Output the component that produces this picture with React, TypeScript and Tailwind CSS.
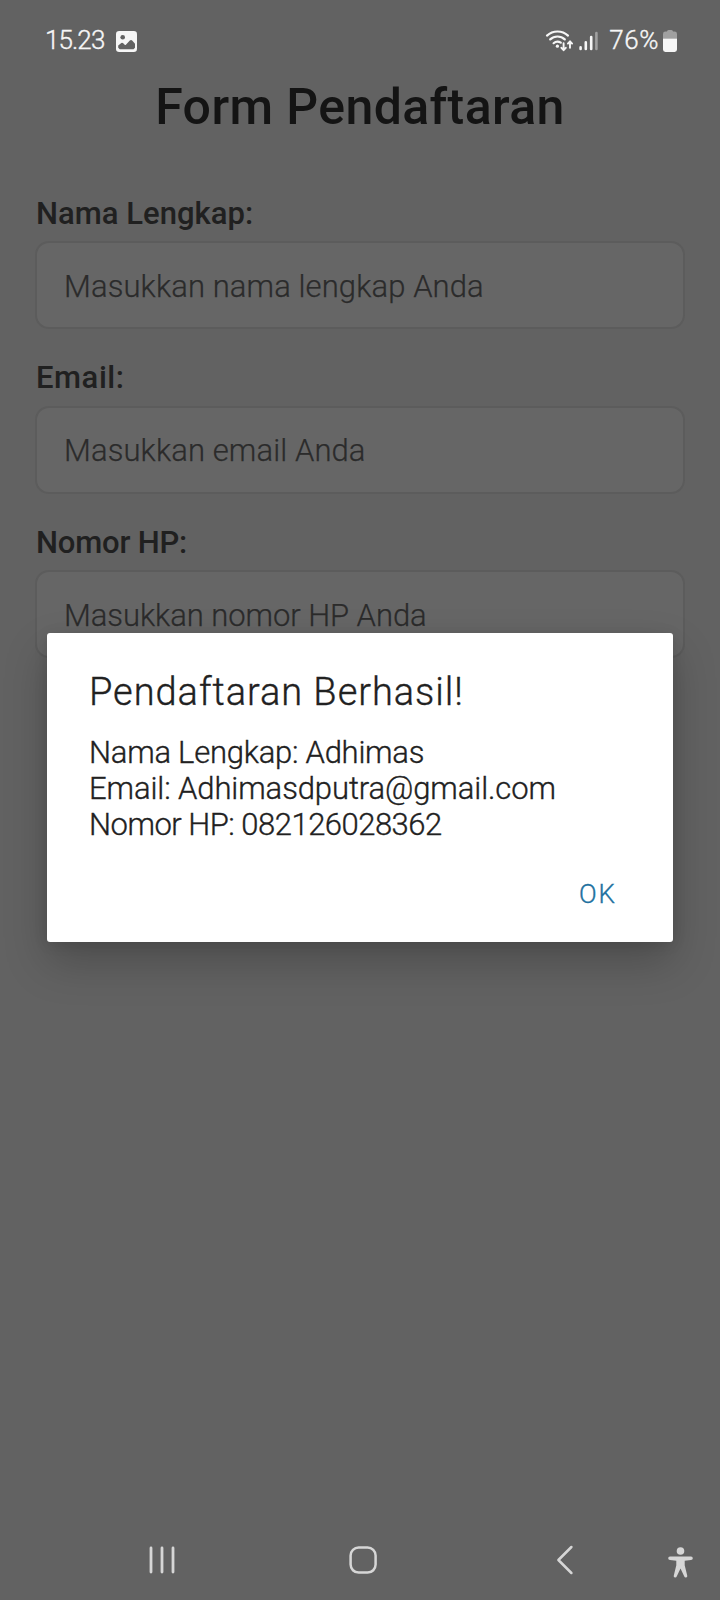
const fields = [
  { label: "Nama Lengkap:", placeholder: "Masukkan nama lengkap Anda", labelClass: "tracking-[0.03px]", textClass: "tracking-[0.1px]" },
  { label: "Email:", placeholder: "Masukkan email Anda", labelClass: "tracking-[0.55px]", textClass: "tracking-[0.1px]" },
  { label: "Nomor HP:", placeholder: "Masukkan nomor HP Anda", labelClass: "tracking-[-0.2px]", textClass: "tracking-[-0.06px]" },
];

function StatusBar() {
  return (
    <header className="flex h-[80px] items-center pl-[45px] pr-[43px] text-[26px] leading-8 text-[#f6f6f6] [-webkit-text-stroke:0.35px]">
      <span className="w-[60px] whitespace-nowrap tracking-[-0.9px]">15.23</span>
      <svg className="ml-[11px] mt-[2px] h-[21px] w-[21px]" viewBox="0 0 21 21">
        <rect width="21" height="21" rx="3.2" fill="#f6f6f6" />
        <circle cx="6.7" cy="6.3" r="2.3" fill="#626262" />
        <path d="M2.200 16.800v-2.400l2.500-2q1.500-1.200 2.800.2l1.200 1.200q.6.600 1.200-.1L13.800 9.600q1.300-1.200 2.600.1l2.600 3v4.100l-1.500 1.500H3.700z" fill="#626262" />
      </svg>
      <div className="ml-auto flex items-center">
        <svg className="h-[24px] w-[54px]" viewBox="0 0 54 24" fill="none" stroke="#f6f6f6" strokeWidth="2.2" strokeLinecap="round" strokeLinejoin="round">
          <path d="M2 7.6a15.500 15.500 0 0 1 21 0M5.200 11.400a10.600 10.600 0 0 1 14.600 0M8.600 15.200a5.800 5.800 0 0 1 7.200-.5" />
          <circle cx="12.4" cy="18.2" r="1.6" fill="#f6f6f6" stroke="none" />
          <path d="M18.600 15.200v6.600m-2.200-2 2.200 2.400 2.200-2.400M25 19.800v-6.200m-2.100 2 2.100-2.300 2.100 2.300" strokeWidth="1.9" />
          <path d="M35.600 19.400v1.600M40.800 14.400v6.600M46.200 9v12" strokeWidth="2.6" />
          <path d="M51.400 5v16" stroke="#a0a0a0" strokeWidth="2.6" />
        </svg>
        <span className="ml-[10px] whitespace-nowrap tracking-[0.6px]">76%</span>
        <svg className="ml-[4px] mt-[1px] h-[22px] w-[14px]" viewBox="0 0 14 22">
          <path d="M4 1.600A1.600 1.600 0 0 1 5.600 0h2.800A1.600 1.600 0 0 1 10 1.600h1.600A2.400 2.400 0 0 1 14 4v4.500H0V4a2.400 2.400 0 0 1 2.400-2.400z" fill="#a0a0a0" />
          <path d="M0 8.400h14v11.200a2.400 2.400 0 0 1-2.400 2.400H2.400A2.400 2.400 0 0 1 0 19.600z" fill="#f6f6f6" />
        </svg>
      </div>
    </header>
  );
}

function ResultDialog() {
  return (
    <section role="dialog" className="absolute left-[47px] top-[633px] flex h-[308.500px] w-[626px] flex-col rounded-[3px] bg-white pl-[42px] pr-[56px] text-[#212121] shadow-[0_20px_44px_rgba(0,0,0,0.22),0_2px_14px_rgba(0,0,0,0.10)] [-webkit-text-stroke:0.35px]">
      <h2 className="mt-[37px] whitespace-nowrap text-[38px] leading-[44px] tracking-[0.95px]">Pendaftaran Berhasil!</h2>
      <div className="mt-[21px] whitespace-nowrap text-[31px] leading-[36px]">
        <p className="tracking-[-0.25px]">Nama Lengkap: Adhimas</p>
        <p className="tracking-[-0.1px]">Email: Adhimasdputra@gmail.com</p>
        <p className="tracking-[-0.5px]">Nomor HP: 082126028362</p>
      </div>
      <button className="mt-[35px] self-end text-[26px] leading-[32px] tracking-[2px] text-[#22719f]">OK</button>
    </section>
  );
}

function NavigationBar() {
  return (
    <nav className="mt-auto flex h-[80px] items-center pl-[149px] pr-[27px] text-[#d6d6d6]">
      <svg className="h-[28px] w-[27px]" viewBox="0 0 27 28" stroke="currentColor" strokeWidth="2.8" strokeLinecap="round">
        <path d="M2 2v24M13 2v24M24 2v24" />
      </svg>
      <svg className="ml-[173px] h-[28px] w-[28px]" viewBox="0 0 28 28" fill="none" stroke="currentColor" strokeWidth="2.5">
        <rect x="1.6" y="1.6" width="25" height="25" rx="8" />
      </svg>
      <svg className="ml-[179px] h-[30px] w-[18px]" viewBox="0 0 18 30" fill="none" stroke="currentColor" strokeWidth="2.5" strokeLinecap="round" strokeLinejoin="round">
        <path d="M15.400 2 2.400 15l13 13" />
      </svg>
      <svg className="ml-auto mt-[4px] h-[31px] w-[25px]" viewBox="0 0 25 31" fill="currentColor">
        <circle cx="12.5" cy="4" r="3.8" />
        <path d="M2 9.400h21a1.800 1.800 0 0 1 0 3.600l-6.300.8v4.500l2.500 10.200a1.500 1.500 0 0 1-2.900 1L12.500 21.500 8.700 29.500a1.500 1.500 0 0 1-2.900-1l2.500-10.200v-4.500L2 13a1.800 1.800 0 0 1 0-3.600z" />
      </svg>
    </nav>
  );
}

export default function App() {
  return (
    <div className="relative flex h-[1600px] w-[720px] flex-col overflow-hidden bg-[#626262] font-['Roboto',sans-serif] font-light">
      <StatusBar />
      <main className="px-[35px]">
        <h1 className="whitespace-nowrap text-center text-[50px] font-medium leading-[54px] tracking-[0.4px] text-[#141414]">Form Pendaftaran</h1>
        <form className="mt-[60.500px] flex flex-col gap-[30px]">
          {fields.map((f) => (
            <label key={f.label} className="block whitespace-nowrap text-[31px]">
              <span className={`block h-[46.500px] pl-px pt-px font-medium leading-[36px] text-[#202020] ${f.labelClass}`}>{f.label}</span>
              <span className={`flex h-[88px] items-center rounded-[14px] border-2 border-[#5c5c5c] bg-[#666666] px-[27px] pt-[3px] leading-[36px] text-[#2b2b2b] [-webkit-text-stroke:0.25px] ${f.textClass}`}>{f.placeholder}</span>
            </label>
          ))}
        </form>
      </main>
      <ResultDialog />
      <NavigationBar />
    </div>
  );
}
